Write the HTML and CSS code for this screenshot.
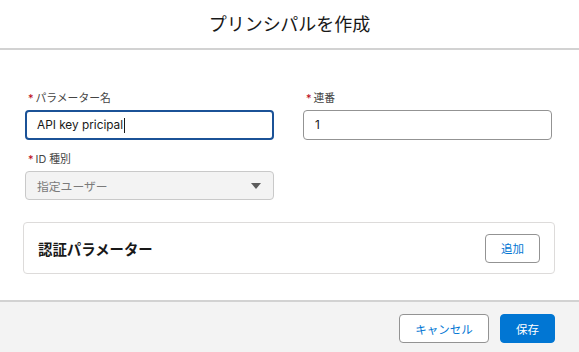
FILE: index.html
```html
<!DOCTYPE html>
<html lang="ja">
<head>
    <meta charset="UTF-8">
    <title>プリンシパルを作成</title>
    <link rel="stylesheet" href="styles.css">
</head>
<body>
    <div class="modal">
        <div class="cabecera">
            <h1>プリンシパルを作成</h1>
        </div>

        <div class="contenido">
            <div class="campos">
                <div class="campo">
                    <label class="etiqueta"><span class="req">*</span>パラメーター名</label>
                    <div class="entrada enfocada">API key pricipal<span class="cursor"></span></div>
                </div>
                <div class="campo">
                    <label class="etiqueta"><span class="req">*</span>連番</label>
                    <div class="entrada">1</div>
                </div>
                <div class="campo">
                    <label class="etiqueta"><span class="req">*</span>ID 種別</label>
                    <div class="entrada seleccion">
                        <span>指定ユーザー</span>
                        <span class="flecha"></span>
                    </div>
                </div>
            </div>

            <div class="tarjeta">
                <h2>認証パラメーター</h2>
                <button class="boton">追加</button>
            </div>
        </div>

        <div class="pie">
            <button class="boton">キャンセル</button>
            <button class="boton primario">保存</button>
        </div>
    </div>
</body>
</html>
```

FILE: styles.css
```css
body {
    margin: 0;
    background: #fff;
    font-family: Inter, "Noto Sans CJK JP", sans-serif;
    color: #181818;
    overflow: hidden;
}

.modal {
    width: 579px;
    height: 352px;
    display: flex;
    flex-direction: column;
}

.cabecera {
    height: 48px;
    border-bottom: 2px solid #d2d2d2;
    display: flex;
    justify-content: center;
    align-items: center;
    padding-bottom: 3px;
    box-sizing: content-box;
    height: 45px;
}

.cabecera h1 {
    margin: 0;
    font-size: 18px;
    font-weight: 400;
    color: #181818;
}

.contenido {
    padding: 40px 24px 0 23px;
    flex: 1;
}

.campos {
    display: grid;
    grid-template-columns: 1fr 1fr;
    column-gap: 29px;
    row-gap: 11px;
    padding: 0 3px 0 2px;
}

.etiqueta {
    display: block;
    font-size: 10.8px;
    line-height: 16px;
    color: #444;
    margin-bottom: 3px;
    padding-left: 3px;
}

.req {
    color: #ba0517;
    margin-right: 2px;
    font-size: 11px;
}

.entrada {
    box-sizing: border-box;
    height: 30px;
    border: 1px solid #939393;
    border-radius: 4px;
    padding: 0 11px;
    display: flex;
    align-items: center;
    font-size: 11.8px;
    color: #181818;
    background: #fff;
}

.entrada.enfocada {
    border: 2px solid #1b5297;
    padding: 0 10px;
}

.cursor {
    display: inline-block;
    width: 1px;
    height: 15px;
    background: #181818;
    margin-left: 1px;
}

.seleccion {
    justify-content: space-between;
    background: #f3f3f3;
    border-color: #c9c9c9;
    color: #7a7a7a;
    height: 29px;
}

.flecha {
    width: 0;
    height: 0;
    border-left: 5px solid transparent;
    border-right: 5px solid transparent;
    border-top: 6px solid #5c5c5c;
    margin-right: 1px;
}

.tarjeta {
    margin-top: 22px;
    box-sizing: border-box;
    height: 52px;
    border: 1px solid #dddbda;
    border-radius: 4px;
    display: flex;
    justify-content: space-between;
    align-items: center;
    padding: 0 14px 0 14px;
}

.tarjeta h2 {
    margin: 0;
    font-size: 14.4px;
    font-weight: 700;
    color: #181818;
}

.boton {
    font-family: Inter, "Noto Sans CJK JP", sans-serif;
    font-size: 11.5px;
    height: 29px;
    padding: 0 15px;
    background: #fff;
    border: 1px solid #939393;
    border-radius: 4px;
    color: #0176d3;
}

.pie {
    height: 52px;
    border-top: 2px solid #d2d2d2;
    background: #f3f3f3;
    display: flex;
    justify-content: flex-end;
    align-items: flex-start;
    gap: 11px;
    padding: 12px 24px 0 0;
    box-sizing: border-box;
}

.pie .boton {
    width: 90px;
}

.pie .boton.primario {
    width: 55px;
    background: #0176d3;
    border-color: #0176d3;
    color: #fff;
}
```
